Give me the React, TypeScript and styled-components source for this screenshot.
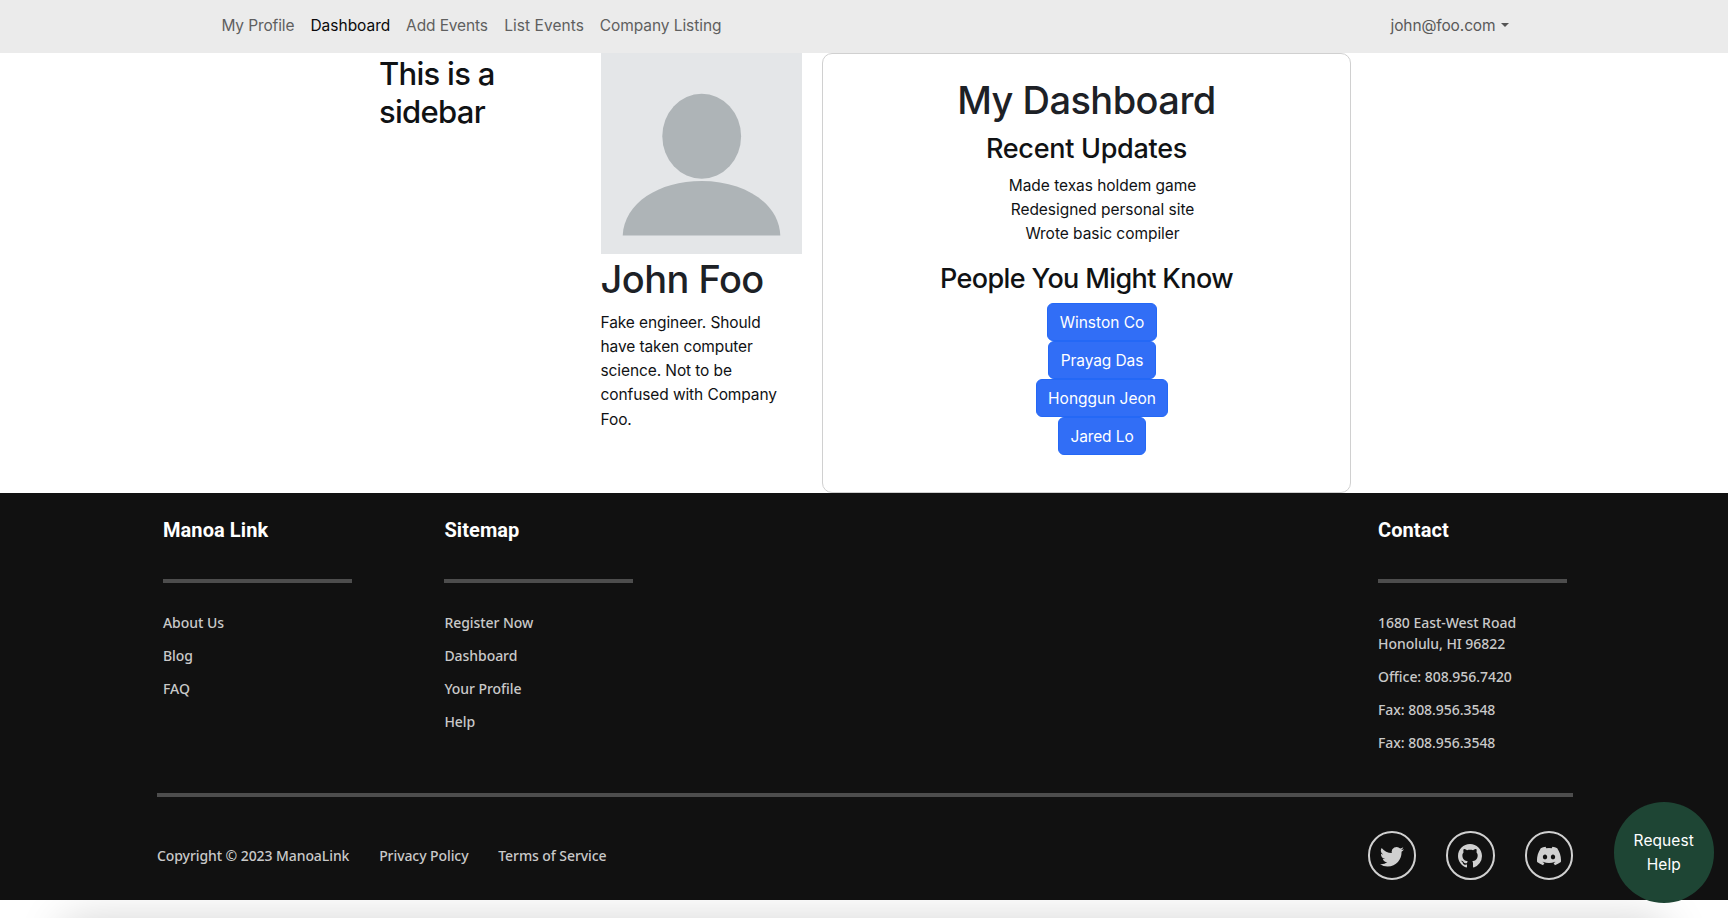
import React from 'react';
import styled, { createGlobalStyle } from 'styled-components';
import { BsTwitter, BsGithub, BsDiscord } from 'react-icons/bs';

const GlobalStyle = createGlobalStyle`
  *, *::before, *::after { box-sizing: border-box; }
  body {
    margin: 0;
    background: #fff;
    color: #101214;
    font: 400 15.5px/24.15px Inter, "Liberation Sans", sans-serif;
    overflow: hidden;
  }
  h1, h2, h3, p, ul { margin: 0; padding: 0; font-weight: 500; }
  p { font-weight: 400; }
  ul { list-style: none; font-weight: 400; }
  a { color: inherit; text-decoration: none; white-space: nowrap; }
`;

/* Horizontal tracking, in px, for a single run of text. */
const Track = styled.span<{ $by: number }>`
  letter-spacing: ${(p) => p.$by}px;
  white-space: nowrap;
`;

const Page = styled.div`
  position: relative;
  height: 918px;
  overflow: hidden;
`;

const NavBar = styled.nav`
  display: flex;
  justify-content: space-between;
  height: 53px;
  padding: 14px 219.5px 0 221.4px;
  background: #ebebeb;
`;

const NavLinks = styled.div`
  display: flex;
`;

const NavLink = styled.a<{ $active?: boolean; $w: number; $by: number }>`
  width: ${(p) => p.$w}px;
  letter-spacing: ${(p) => p.$by}px;
  color: ${(p) => (p.$active ? '#0a0a0a' : '#5f5f5f')};
`;

const UserMenu = styled.a`
  display: flex;
  align-items: center;
  height: 24px;
  gap: 5px;
  color: #5a5a5a;
  letter-spacing: -0.12px;

  &::after {
    content: '';
    border: 4.5px solid transparent;
    border-top-color: #555;
    border-bottom: 0;
    margin-top: -2px;
  }
`;

const Main = styled.main`
  display: flex;
  height: 440px;
  padding-left: 379px;
`;

const Sidebar = styled.aside`
  width: 221.5px;
`;

const SidebarTitle = styled.h2`
  width: 150px;
  padding-top: 1.5px;
  font-size: 31px;
  line-height: 38.7px;
  letter-spacing: -0.72px;
`;

const Profile = styled.section`
  width: 201px;
  margin-right: 20.5px;
`;

const Avatar = styled.svg`
  display: block;
  width: 201px;
  height: 201px;
`;

const ProfileName = styled.h1`
  margin: 1px 0 8px;
  font-size: 38px;
  line-height: 48px;
  letter-spacing: -0.55px;
  color: #1d2126;
`;

const Bio = styled.p`
  font-size: 15.5px;
  line-height: 24.15px;
  letter-spacing: -0.1px;
`;

const Card = styled.section`
  width: 529px;
  height: 439.5px;
  padding-top: 22px;
  border: 1px solid #d0d0d0;
  border-radius: 10px;
  text-align: center;
`;

const CardTitle = styled.h1`
  margin-bottom: 8px;
  font-size: 38px;
  line-height: 48px;
  letter-spacing: -0.55px;
  color: #1d2126;
`;

const CardHeading = styled.h3<{ $by: number }>`
  margin-bottom: 8px;
  font-size: 27px;
  line-height: 33.6px;
  letter-spacing: ${(p) => p.$by}px;
`;

const UpdateList = styled.ul`
  margin-bottom: 16px;
  padding-left: 32px;
  letter-spacing: -0.04px;
`;

const PeopleList = styled.ul`
  display: flex;
  flex-direction: column;
  align-items: center;
  margin-top: -1px;
  padding-left: 31px;
`;

const PersonButton = styled.a<{ $w: number }>`
  display: block;
  width: ${(p) => p.$w}px;
  height: 38.2px;
  border: 1px solid #2468f6;
  border-radius: 6px;
  background: #316ef6;
  color: #fff;
  line-height: 37px;
`;

const Footer = styled.footer`
  height: 406.5px;
  padding: 0 155px 0 157px;
  background: #111;
  color: #c9c9c9;
  font: 500 14px/21px "Noto Sans", "Liberation Sans", sans-serif;
`;

const FooterColumns = styled.div`
  display: flex;
  height: 300px;
  padding: 25px 6px 0;
`;

const FooterColumn = styled.div<{ $last?: boolean }>`
  width: 189px;
  margin-right: ${(p) => (p.$last ? 0 : 92.4)}px;
  margin-left: ${(p) => (p.$last ? 'auto' : 0)};
`;

const FooterHeading = styled.h2`
  height: 61px;
  font: 700 20px/24px Roboto, "Liberation Sans", sans-serif;
  letter-spacing: 0.08px;
  color: #fff;
`;

const Rule = styled.div`
  height: 4px;
  background: #4d4d4d;
`;

const FooterList = styled.ul`
  display: flex;
  flex-direction: column;
  gap: 12.1px;
  padding-top: 28.5px;
`;

const FooterItem = styled.li`
  letter-spacing: -0.05px;
  font-weight: 500;
`;

const FooterBottom = styled.div`
  display: flex;
  align-items: center;
  justify-content: space-between;
  height: 48px;
  margin-top: 34.5px;
`;

const Legal = styled.div`
  display: flex;
  gap: 29.8px;
  letter-spacing: -0.08px;
`;

const Socials = styled.div`
  display: flex;
  gap: 30px;
`;

const SocialLink = styled.a`
  display: flex;
  align-items: center;
  justify-content: center;
  width: 48.4px;
  height: 48.4px;
  border: 2px solid #d0d0d0;
  border-radius: 50%;
  color: #d0d0d0;
  font-size: 24px;
`;

const BottomShade = styled.div`
  height: 60px;
  margin: 33px 76px 0;
  box-shadow: 0 0 46px 12px rgba(0, 0, 0, 0.19);
`;

const ShadeClip = styled.div`
  height: 19px;
  overflow: hidden;
`;

const HelpButton = styled.a`
  position: absolute;
  top: 802px;
  left: 1613.5px;
  display: flex;
  align-items: center;
  justify-content: center;
  width: 100.5px;
  height: 100.5px;
  padding-top: 2px;
  border-radius: 50%;
  background: #1e4534;
  color: #fff;
  text-align: center;
`;

const navLinks = [
  { label: 'My Profile', width: 89, by: -0.12 },
  { label: 'Dashboard', width: 95.7, by: 0 },
  { label: 'Add Events', width: 98.2, by: -0.12 },
  { label: 'List Events', width: 95.4, by: 0.04 },
  { label: 'Company Listing', width: 130, by: -0.06 },
];

const people = [
  { name: 'Winston Co', width: 110, by: 0 },
  { name: 'Prayag Das', width: 108.5, by: -0.1 },
  { name: 'Honggun Jeon', width: 132.5, by: -0.02 },
  { name: 'Jared Lo', width: 88, by: -0.12 },
];

export default function App() {
  return (
    <Page>
      <GlobalStyle />
      <NavBar>
        <NavLinks>
          {navLinks.map((l) => (
            <NavLink
              key={l.label}
              href="#"
              $active={l.label === 'Dashboard'}
              $w={l.width}
              $by={l.by}
            >
              {l.label}
            </NavLink>
          ))}
        </NavLinks>
        <UserMenu href="#">john@foo.com</UserMenu>
      </NavBar>

      <Main>
        <Sidebar>
          <SidebarTitle>This is a sidebar</SidebarTitle>
        </Sidebar>
        <Profile>
          <Avatar viewBox="0 0 201 201">
            <rect width="201" height="201" fill="#e4e6e8" />
            <ellipse cx="100.7" cy="83.3" rx="39.4" ry="42.5" fill="#aeb4b7" />
            <path d="M21.7 182.6C23 150 58 128 100.500 128S178.300 150 179.300 182.600Z" fill="#aeb4b7" />
          </Avatar>
          <ProfileName>John Foo</ProfileName>
          <Bio>
            Fake engineer. Should
            <br />
            have taken computer
            <br />
            science. Not to be
            <br />
            confused with Company
            <br />
            Foo.
          </Bio>
        </Profile>
        <Card>
          <CardTitle>My Dashboard</CardTitle>
          <CardHeading $by={-0.28}>Recent Updates</CardHeading>
          <UpdateList>
            <li>Made texas holdem game</li>
            <li>Redesigned personal site</li>
            <li>Wrote basic compiler</li>
          </UpdateList>
          <CardHeading $by={-0.62}>People You Might Know</CardHeading>
          <PeopleList>
            {people.map((p) => (
              <li key={p.name}>
                <PersonButton href="#" $w={p.width}>
                  <Track $by={p.by}>{p.name}</Track>
                </PersonButton>
              </li>
            ))}
          </PeopleList>
        </Card>
      </Main>

      <Footer>
        <FooterColumns>
          <FooterColumn>
            <FooterHeading>Manoa Link</FooterHeading>
            <Rule />
            <FooterList>
              <FooterItem>About Us</FooterItem>
              <FooterItem>Blog</FooterItem>
              <FooterItem>FAQ</FooterItem>
            </FooterList>
          </FooterColumn>
          <FooterColumn>
            <FooterHeading>Sitemap</FooterHeading>
            <Rule />
            <FooterList>
              <FooterItem>Register Now</FooterItem>
              <FooterItem>Dashboard</FooterItem>
              <FooterItem>Your Profile</FooterItem>
              <FooterItem>Help</FooterItem>
            </FooterList>
          </FooterColumn>
          <FooterColumn $last>
            <FooterHeading>Contact</FooterHeading>
            <Rule />
            <FooterList>
              <FooterItem>
                1680 East-West Road
                <br />
                Honolulu, HI 96822
              </FooterItem>
              <FooterItem>Office: 808.956.7420</FooterItem>
              <FooterItem>Fax: 808.956.3548</FooterItem>
              <FooterItem>Fax: 808.956.3548</FooterItem>
            </FooterList>
          </FooterColumn>
        </FooterColumns>
        <Rule />
        <FooterBottom>
          <Legal>
            <span>Copyright © 2023 ManoaLink</span>
            <a href="#">Privacy Policy</a>
            <a href="#">Terms of Service</a>
          </Legal>
          <Socials>
            <SocialLink href="#" aria-label="Twitter">
              <BsTwitter />
            </SocialLink>
            <SocialLink href="#" aria-label="GitHub">
              <BsGithub />
            </SocialLink>
            <SocialLink href="#" aria-label="Discord">
              <BsDiscord />
            </SocialLink>
          </Socials>
        </FooterBottom>
      </Footer>
      <ShadeClip>
        <BottomShade />
      </ShadeClip>
      <HelpButton href="#">
        <Track $by={0.1}>
          Request
          <br />
          Help
        </Track>
      </HelpButton>
    </Page>
  );
}
